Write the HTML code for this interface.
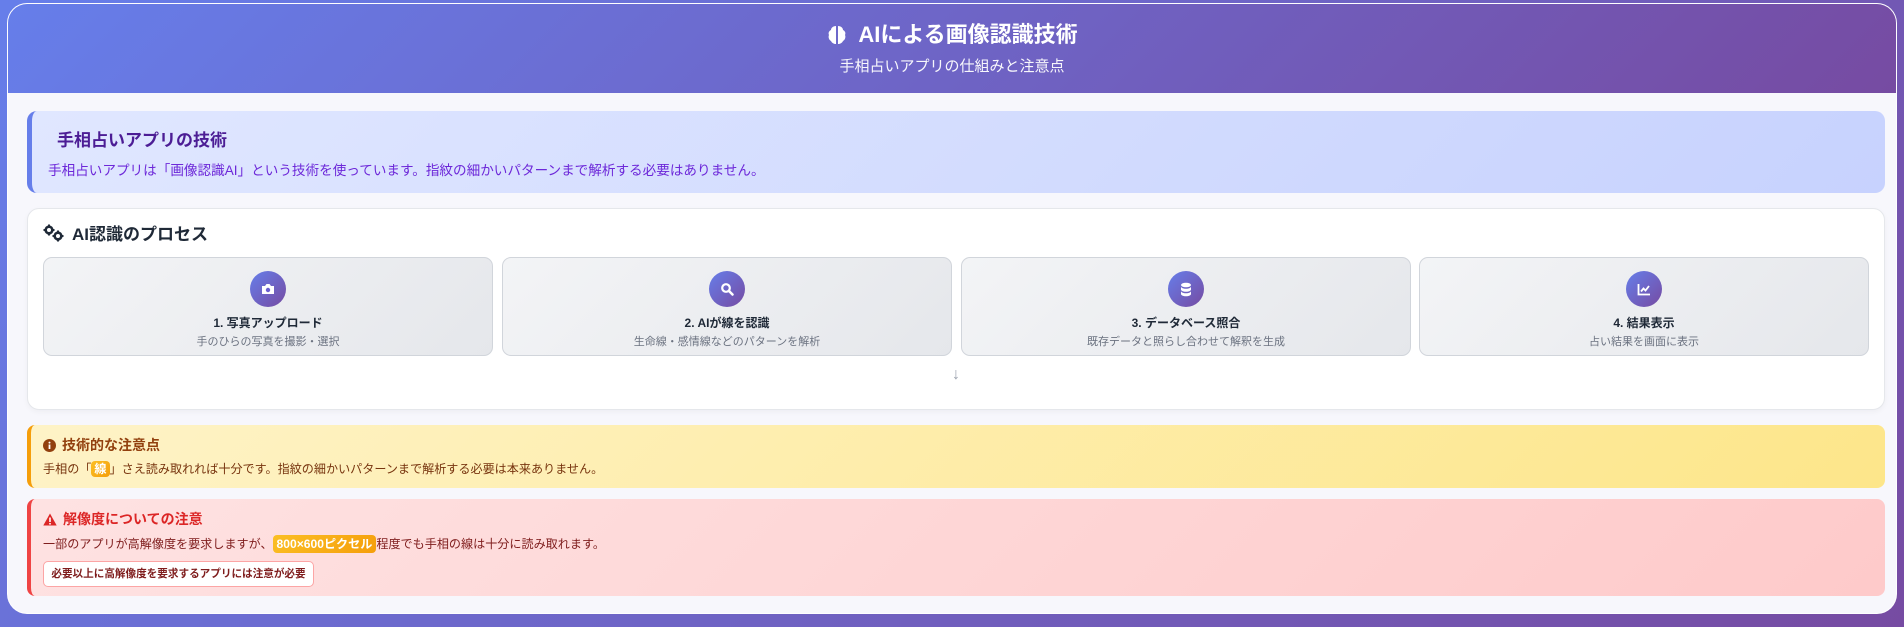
<!DOCTYPE html>
<html><head><meta charset="utf-8"><style>
*{box-sizing:border-box;margin:0;padding:0}
body{width:1904px;height:627px;overflow:hidden;background:linear-gradient(135deg,#667eea 0%,#764ba2 100%);font-family:"Liberation Sans","Noto Sans CJK JP",sans-serif;position:relative}
.wrap{position:absolute;left:7px;top:3px;width:1890px;height:611px;background:#f7f7fc;border-radius:20px;overflow:hidden;border:1px solid rgba(255,255,255,.8)}
.hdr{height:89px;background:linear-gradient(135deg,#667eea 0%,#764ba2 100%);color:#fff;text-align:center}
.hdr h1{font-size:22px;font-weight:bold;padding-top:17px;line-height:28px;display:flex;justify-content:center;align-items:center;gap:10px}
.hdr p{font-size:15px;margin-top:6px;opacity:.95}
.info{position:absolute;left:19px;top:107px;width:1858px;height:82px;border-radius:10px;border-left:5px solid #667eea;background:linear-gradient(135deg,#e0e7ff,#c7d2fe)}
.info h2{position:absolute;left:25px;top:15px;font-size:17px;color:#4c1d95;font-weight:bold}
.info p{position:absolute;left:16px;top:48px;font-size:13.6px;color:#6d28d9}
.proc{position:absolute;left:19px;top:204px;width:1858px;height:202px;background:#fff;border-radius:12px;border:1px solid #e5e7eb;box-shadow:0 2px 6px rgba(0,0,0,.04)}
.proc h3{position:absolute;left:15px;top:11px;font-size:17px;color:#1f2937;font-weight:bold;display:flex;align-items:center;gap:7px}
.step{position:absolute;top:48px;width:450px;height:99px;border:1px solid #d1d5db;border-radius:9px;background:linear-gradient(135deg,#f3f4f6,#e5e7eb);text-align:center}
.ic{width:36px;height:36px;border-radius:50%;background:linear-gradient(135deg,#667eea,#764ba2);margin:13px auto 0;display:flex;align-items:center;justify-content:center}
.step b{display:block;font-size:12px;color:#1f2937;margin-top:7px}
.step span{display:block;font-size:11px;color:#6b7280;margin-top:2px}
.arr{position:absolute;left:0;right:0;top:157px;text-align:center;color:#9ca3af;font-size:16px}
.warn{position:absolute;left:19px;top:421px;width:1858px;height:63px;border-radius:8px;border-left:4px solid #f59e0b;background:linear-gradient(135deg,#fef3c7,#fde68a)}
.warn h4{position:absolute;left:12px;top:10px;font-size:14px;color:#92400e;font-weight:bold;display:flex;align-items:center;gap:6px}
.warn p{position:absolute;left:12px;top:35px;font-size:12.1px;color:#78350f;white-space:nowrap}
.tag{background:linear-gradient(135deg,#fbbf24,#f59e0b);color:#fff;font-weight:bold;border-radius:4px;padding:1px 3px}
.err{position:absolute;left:19px;top:495px;width:1858px;height:97px;border-radius:8px;border-left:4px solid #ef4444;background:linear-gradient(135deg,#fee2e2,#fecaca)}
.err h4{position:absolute;left:12px;top:10px;font-size:14px;color:#dc2626;font-weight:bold;display:flex;align-items:center;gap:6px}
.err p{position:absolute;left:12px;top:36px;font-size:12.1px;color:#7f1d1d;white-space:nowrap}
.btn{position:absolute;left:12px;top:62px;width:271px;height:26px;background:#fff;border:1px solid #fca5a5;border-radius:5px;font-size:10.6px;font-weight:bold;color:#7f1d1d;text-align:center;line-height:24px;white-space:nowrap}
</style></head><body>
<div class="wrap">
<div class="hdr"><h1><svg width="22" height="22" viewBox="0 0 22 22"><path d="M10 2C7 2 5 4 5 6 3 7 2 9 3 11 2 13 3 16 5 17 6 19 8 20 10 20Z M12 2C15 2 17 4 17 6 19 7 20 9 19 11 20 13 19 16 17 17 16 19 14 20 12 20Z" fill="#fff"/></svg>AIによる画像認識技術</h1><p>手相占いアプリの仕組みと注意点</p></div>
<div class="info"><h2>手相占いアプリの技術</h2><p>手相占いアプリは「画像認識AI」という技術を使っています。指紋の細かいパターンまで解析する必要はありません。</p></div>
<div class="proc"><h3><svg width="22" height="18" viewBox="0 0 22 18"><circle cx="6" cy="6" r="3.3" fill="none" stroke="#1f2937" stroke-width="2.6"/><circle cx="15" cy="12" r="3.3" fill="none" stroke="#1f2937" stroke-width="2.6"/><path d="M6 0.5v2M6 9.5v2M0.5 6h2M9.5 6h2M15 6.5v2M15 15.5v2M9.5 12h2M18.5 12h2" stroke="#1f2937" stroke-width="2"/></svg>AI認識のプロセス</h3>
<div class="step" style="left:15px"><div class="ic"><svg width="14" height="12" viewBox="0 0 14 12"><path d="M1 3h3l1.5-2h3L10 3h3v8H1z" fill="#fff"/><circle cx="7" cy="7" r="2.2" fill="#6b5fd0"/></svg></div><b>1. 写真アップロード</b><span>手のひらの写真を撮影・選択</span></div>
<div class="step" style="left:474px"><div class="ic"><svg width="14" height="14" viewBox="0 0 14 14"><circle cx="6" cy="6" r="3.8" fill="none" stroke="#fff" stroke-width="2.2"/><path d="M9 9l3.5 3.5" stroke="#fff" stroke-width="2.5" stroke-linecap="round"/></svg></div><b>2. AIが線を認識</b><span>生命線・感情線などのパターンを解析</span></div>
<div class="step" style="left:933px"><div class="ic"><svg width="12" height="15" viewBox="0 0 12 15"><ellipse cx="6" cy="3" rx="5" ry="2.3" fill="#fff"/><path d="M1 4.5v3c0 1.3 2.2 2.3 5 2.3s5-1 5-2.3v-3c0 1.3-2.2 2.3-5 2.3S1 5.8 1 4.5zM1 9v3c0 1.3 2.2 2.3 5 2.3s5-1 5-2.3V9c0 1.3-2.2 2.3-5 2.3S1 10.3 1 9z" fill="#fff"/></svg></div><b>3. データベース照合</b><span>既存データと照らし合わせて解釈を生成</span></div>
<div class="step" style="left:1391px"><div class="ic"><svg width="14" height="13" viewBox="0 0 14 13"><path d="M1.5 1v10.5H13" fill="none" stroke="#fff" stroke-width="1.8"/><path d="M4 8.5l2.5-3 2 2L12 3" fill="none" stroke="#fff" stroke-width="1.8"/></svg></div><b>4. 結果表示</b><span>占い結果を画面に表示</span></div>
<div class="arr">↓</div></div>
<div class="warn"><h4><svg width="13" height="13" viewBox="0 0 13 13"><circle cx="6.5" cy="6.5" r="6.5" fill="#92400e"/><rect x="5.6" y="5.5" width="1.8" height="4.5" fill="#fff"/><circle cx="6.5" cy="3.6" r="1" fill="#fff"/></svg>技術的な注意点</h4><p>手相の「<span class="tag">線</span>」さえ読み取れれば十分です。指紋の細かいパターンまで解析する必要は本来ありません。</p></div>
<div class="err"><h4><svg width="14" height="13" viewBox="0 0 14 13"><path d="M7 0.5L13.7 12.5H0.3Z" fill="#dc2626"/><rect x="6.2" y="4.5" width="1.6" height="4.5" fill="#fff"/><rect x="6.2" y="10" width="1.6" height="1.5" fill="#fff"/></svg>解像度についての注意</h4><p>一部のアプリが高解像度を要求しますが、<span class="tag" style="padding:2px 4px">800×600ピクセル</span>程度でも手相の線は十分に読み取れます。</p><div class="btn">必要以上に高解像度を要求するアプリには注意が必要</div></div>
</div>
</body></html>
